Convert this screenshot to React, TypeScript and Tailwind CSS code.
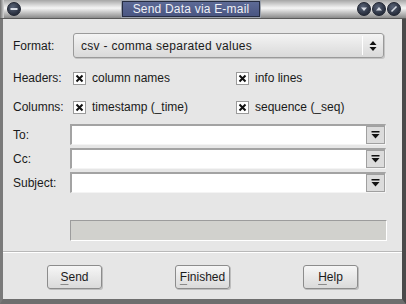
import React from "react";

const font = { fontFamily: '"Liberation Sans", Arial, sans-serif' };

function CircleBtn({ kind }: { kind: "min" | "down" | "up" | "close" }) {
  return (
    <div className="w-[14px] h-[14px] rounded-full border border-[#1e2330] bg-[radial-gradient(circle_at_40%_35%,#5a6478_0%,#2f3646_60%,#1c212c_100%)] flex items-center justify-center">
      <svg width="10" height="10" viewBox="0 0 10 10">
        {kind === "min" && <rect x="1.5" y="4" width="7" height="2" fill="#d8dce4" />}
        {kind === "down" && <polygon points="2,3.5 8,3.5 5,7" fill="#d8dce4" />}
        {kind === "up" && <polygon points="2,6.5 8,6.5 5,3" fill="#d8dce4" />}
        {kind === "close" && <line x1="2.5" y1="7.5" x2="7.5" y2="2.5" stroke="#d8dce4" strokeWidth="1.6" />}
      </svg>
    </div>
  );
}

function Check({ label }: { label: string }) {
  return (
    <div className="flex items-center">
      <div className="w-[13px] h-[13px] bg-white border border-[#9a9a9a] flex items-center justify-center">
        <svg width="9" height="9" viewBox="0 0 9 9">
          <path d="M1.5 1.5 L7.5 7.5 M7.5 1.5 L1.5 7.5" stroke="#111" strokeWidth="2" />
        </svg>
      </div>
      <span className="ml-[6px] text-[12px]">{label}</span>
    </div>
  );
}

function DropField() {
  return (
    <div className="w-[316px] h-[21px] bg-white border-t-2 border-l-2 border-[#a3a3a3] border-b border-r border-b-[#f4f4f4] border-r-[#f4f4f4] flex justify-end">
      <div className="w-[19px] h-full bg-[#dcdcdc] border border-[#a0a0a0] flex items-center justify-center">
        <svg width="9" height="8" viewBox="0 0 9 8">
          <rect x="0.5" y="0" width="8" height="1.5" fill="#111" />
          <polygon points="0.5,3 8.5,3 4.5,7.5" fill="#111" />
        </svg>
      </div>
    </div>
  );
}

function Btn({ label }: { label: string }) {
  return (
    <div className="w-[55px] h-[24px] rounded-[3px] border border-[#8c8c8c] bg-[linear-gradient(to_bottom,#f6f6f6,#dadada)] shadow-[1px_1px_0_#bdbdbd] flex items-center justify-center text-[12px]">
      <span>
        <span className="underline decoration-[#8a8a8a] underline-offset-[3px]">{label[0]}</span>
        {label.slice(1)}
      </span>
    </div>
  );
}

export default function App() {
  return (
    <div className="w-[406px] h-[304px] flex flex-col bg-[#e6e6e6] select-none" style={font}>
      {/* title bar */}
      <div className="h-[19px] flex items-center border-b border-[#5a5a5a] bg-[linear-gradient(to_bottom,#a6a6a6_0%,#dcdcdc_30%,#f6f6f6_45%,#c4c4c4_70%,#8a8a8a_100%)]">
        <div className="w-[4px] h-full bg-[linear-gradient(to_right,#707070,#d8d8d8)]" />
        <div className="ml-[3px]">
          <CircleBtn kind="min" />
        </div>
        <div className="flex-1 flex justify-center">
          <div className="ml-[4px] w-[138px] h-[16px] bg-[linear-gradient(to_bottom,#5d6a96,#4a5682)] border border-[#262d42] shadow-[0_0_0_1px_#9da3ad] flex items-center justify-center text-[12px] text-[#eef0f6] tracking-[0.2px]">
            Send Data via E-mail
          </div>
        </div>
        <div className="flex gap-[1px] mr-[5px]">
          <CircleBtn kind="down" />
          <CircleBtn kind="up" />
          <CircleBtn kind="close" />
        </div>
      </div>

      {/* body */}
      <div className="flex-1 flex flex-col border-l-[3px] border-l-[#7a7a7a] border-r-[4px] border-r-[#4a4a4a] border-b-[5px] border-b-[#6e6e6e] text-[12px] text-[#1a1a1a]">
        {/* Format */}
        <div className="mt-[14px] flex items-center">
          <div className="w-[67px] pl-[10px]">Format:</div>
          <div className="ml-[3px] w-[311px] h-[25px] rounded-[3px] border border-[#9a9a9a] bg-[linear-gradient(to_bottom,#f4f4f4,#d9d9d9)] shadow-[1px_1px_0_#c4c4c4] flex items-center">
            <span className="flex-1 pl-[7px] tracking-[0.3px]">csv - comma separated values</span>
            <div className="w-[1px] h-[19px] bg-[#b0b0b0] border-r border-white" />
            <div className="w-[20px] flex justify-center">
              <svg width="8" height="12" viewBox="0 0 8 12">
                <polygon points="0.5,5 7.5,5 4,1" fill="#111" />
                <polygon points="0.5,7 7.5,7 4,11" fill="#111" />
              </svg>
            </div>
          </div>
        </div>

        {/* Headers */}
        <div className="mt-[12px] h-[16px] flex items-center">
          <div className="w-[70px] pl-[10px]">Headers:</div>
          <div className="w-[163px]">
            <Check label="column names" />
          </div>
          <Check label="info lines" />
        </div>

        {/* Columns */}
        <div className="mt-[13px] h-[16px] flex items-center">
          <div className="w-[70px] pl-[10px]">Columns:</div>
          <div className="w-[163px]">
            <Check label="timestamp (_time)" />
          </div>
          <Check label="sequence (_seq)" />
        </div>

        {/* To / Cc / Subject */}
        <div className="mt-[9px] flex flex-col gap-[3px]">
          {["To:", "Cc:", "Subject:"].map((l) => (
            <div key={l} className="flex items-center">
              <div className="w-[67px] pl-[10px]">{l}</div>
              <DropField />
            </div>
          ))}
        </div>

        {/* progress */}
        <div className="mt-[27px] ml-[67px] w-[317px] h-[21px] bg-[#d1d1cd] border-t border-l border-[#9c9c9c] border-b border-r border-b-white border-r-white" />

        {/* separator */}
        <div className="mt-[10px] border-t border-[#b8b8b8] border-b border-b-white" />

        {/* buttons */}
        <div className="mt-[12px] pl-[44px] flex gap-[73px]">
          <Btn label="Send" />
          <Btn label="Finished" />
          <Btn label="Help" />
        </div>
      </div>
    </div>
  );
}
